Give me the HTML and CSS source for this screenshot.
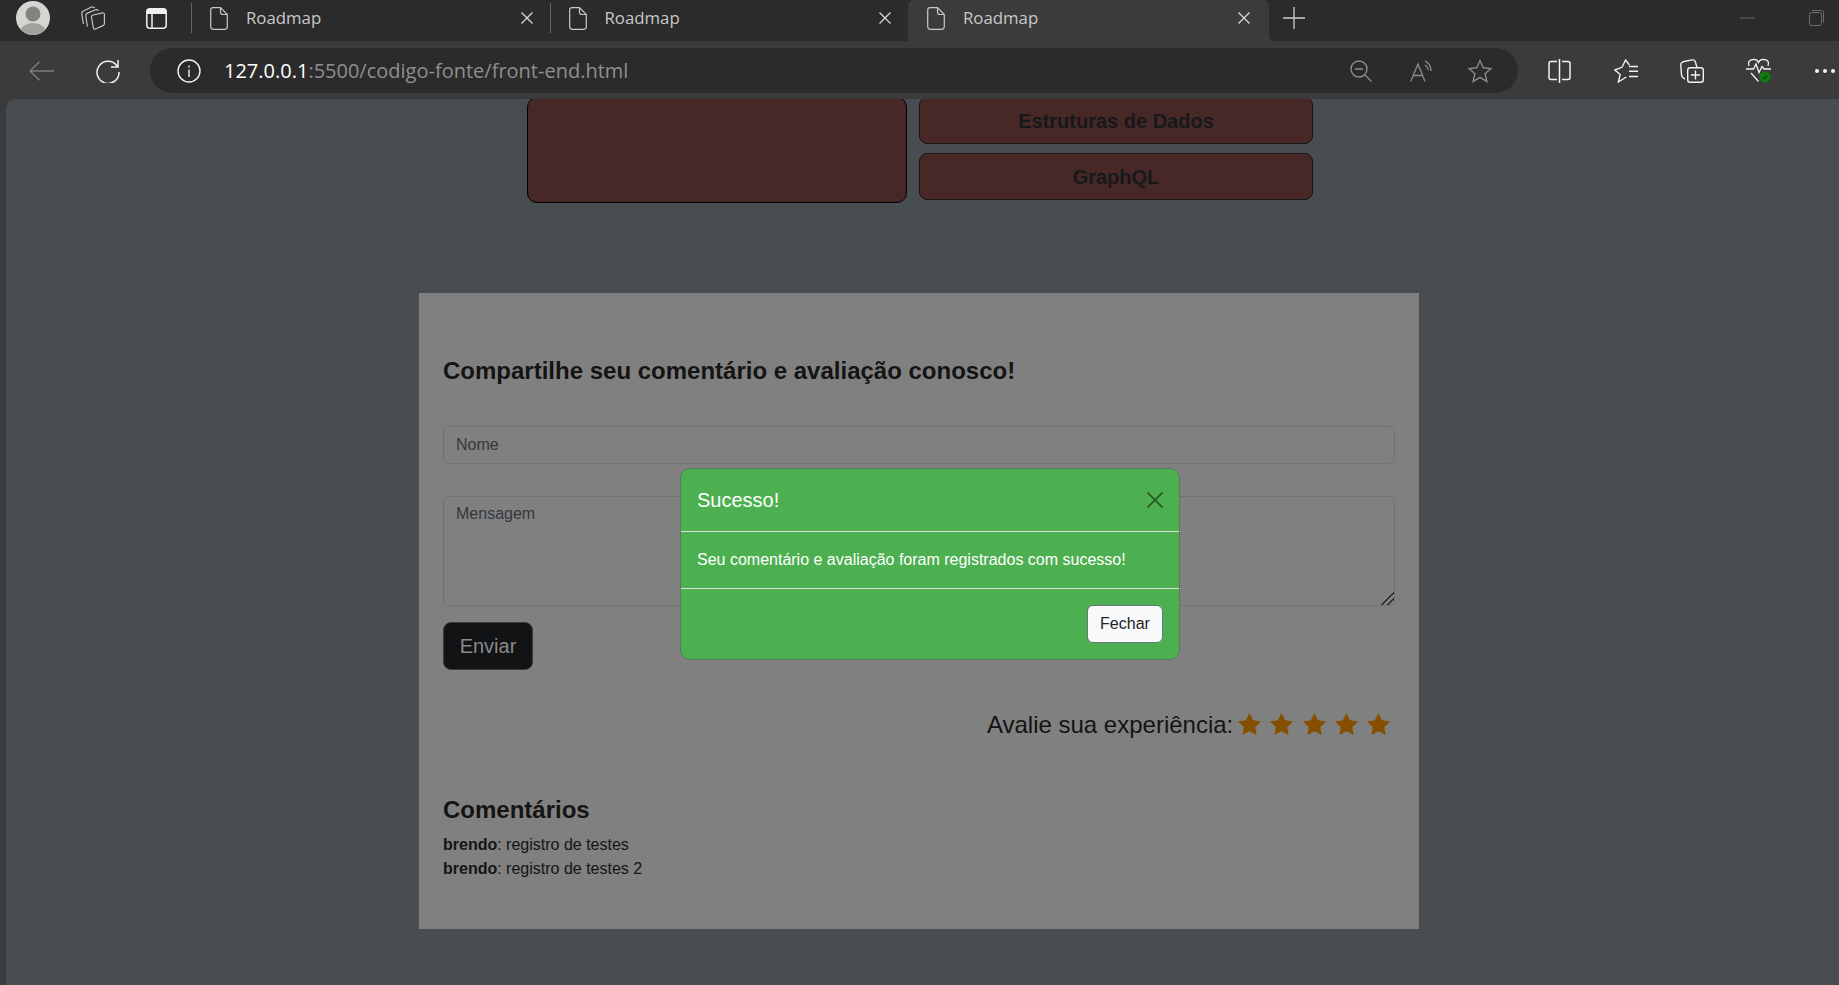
FILE: index.html
```html
<!DOCTYPE html>
<html lang="pt-BR">

<head>
    <meta charset="UTF-8">
    <meta name="viewport" content="width=device-width, initial-scale=1.0">
    <title>Roadmap</title>
    <link rel="stylesheet" href="styles.css">
</head>

<body>
    <!-- abas -->
    <div class="strip">
        <svg class="avatar" width="34" height="34" viewBox="0 0 34 34">
            <clipPath id="avatarClip"><circle cx="17" cy="17" r="17"/></clipPath>
            <g clip-path="url(#avatarClip)">
                <rect width="34" height="34" fill="#d6d5d1"/>
                <circle cx="17" cy="13" r="7.5" fill="#85837f"/>
                <ellipse cx="17" cy="31" rx="13" ry="9" fill="#a3a19d"/>
            </g>
        </svg>
        <svg class="workspaces" width="24" height="24" viewBox="0 0 24 24" fill="none" stroke="#c4c4c4" stroke-width="1.200">
            <path d="M2.500 18Q1.500 13 .8 8 .5 6 2 5.200L10.500 1Q12.500.2 13.800 2.200"/>
            <path d="M6.500 20.500Q5.500 15 4.800 10 4.500 8.200 6 7.400L14.500 3.800Q16.500 3 17.500 4.800"/>
            <path d="M12 9 21.500 6.800Q23.400 6.500 23.400 8.500V17.500Q23.400 19 22 19.600L14.500 23Q12.800 23.600 12.400 21.800L10.400 11Q10.200 9.400 12 9z"/>
        </svg>
        <svg class="vertical" width="21" height="21" viewBox="0 0 21 21" fill="none" stroke="#f0f0f0" stroke-width="1.500">
            <rect x=".8" y=".8" width="19.400" height="19.400" rx="3"/>
            <path d="M6 5.500v15"/>
            <path d="M3 .8h15q2.200 0 2.200 2.200v3H.8V3Q.8.8 3 .8z" fill="#f0f0f0" stroke="none"/>
        </svg>
        <div class="tab">
            <svg width="18" height="23" viewBox="0 0 18 23" fill="none" stroke="#c8c8c8" stroke-width="1.200"><path d="M3 .7h7.500L17.300 7.500V19.500q0 2.800-2.800 2.800H3.500Q.7 22.300.7 19.500V3q0-2.300 2.300-2.300zM10.500.7V5q0 2.500 2.500 2.500h4.300"/></svg>
            <span class="tab-title">Roadmap</span>
            <svg class="tab-close" width="12" height="12" viewBox="0 0 12 12" stroke="#d8d8d8" stroke-width="1.300"><path d="M.5.500l11 11M11.500.500l-11 11"/></svg>
        </div>
        <div class="tab">
            <svg width="18" height="23" viewBox="0 0 18 23" fill="none" stroke="#c8c8c8" stroke-width="1.200"><path d="M3 .7h7.500L17.300 7.500V19.500q0 2.800-2.800 2.800H3.500Q.7 22.300.7 19.500V3q0-2.300 2.300-2.300zM10.500.7V5q0 2.500 2.500 2.500h4.300"/></svg>
            <span class="tab-title">Roadmap</span>
            <svg class="tab-close" width="12" height="12" viewBox="0 0 12 12" stroke="#d8d8d8" stroke-width="1.300"><path d="M.5.500l11 11M11.500.500l-11 11"/></svg>
        </div>
        <div class="tab tab-active">
            <svg width="18" height="23" viewBox="0 0 18 23" fill="none" stroke="#c8c8c8" stroke-width="1.200"><path d="M3 .7h7.500L17.300 7.500V19.500q0 2.800-2.800 2.800H3.500Q.7 22.300.7 19.500V3q0-2.300 2.300-2.300zM10.500.7V5q0 2.500 2.500 2.500h4.300"/></svg>
            <span class="tab-title">Roadmap</span>
            <svg class="tab-close" width="12" height="12" viewBox="0 0 12 12" stroke="#d8d8d8" stroke-width="1.300"><path d="M.5.500l11 11M11.500.500l-11 11"/></svg>
        </div>
        <svg class="new-tab" width="22" height="22" viewBox="0 0 22 22" stroke="#d0d0d0" stroke-width="1.300"><path d="M11 0v22M0 11h22"/></svg>
        <svg class="minimize" width="15" height="2" viewBox="0 0 15 2" stroke="#6a6a6a"><path d="M0 1h15"/></svg>
        <svg class="restore" width="15" height="16" viewBox="0 0 15 16" fill="none" stroke="#6e6e6e"><rect x=".5" y="2.500" width="12" height="13" rx="2"/><path d="M3 .5h9.500q2 0 2 2v10"/></svg>
    </div>

    <!-- barra de endereço -->
    <div class="toolbar">
        <svg class="back" width="25" height="20" viewBox="0 0 25 20" fill="none" stroke="#7c7c7c" stroke-width="1.500"><path d="M25 10H1M10.500.7 1 10l9.500 9.300"/></svg>
        <svg class="reload" width="24" height="24" viewBox="0 0 24 24" fill="none" stroke="#f2f2f2" stroke-width="1.500"><path d="M21 7A11 11 0 1 0 23 13M22 1v7h-7"/></svg>
        <div class="urlbar">
            <svg class="info" width="24" height="24" viewBox="0 0 24 24" fill="none" stroke="#f2f2f2" stroke-width="1.400"><circle cx="12" cy="12" r="11"/><path d="M12 10.500v7.500M12 6.500v2"/></svg>
            <span class="url"><b>127.0.0.1</b>:5500/codigo-fonte/front-end.html</span>
            <svg class="zoom-out" width="22" height="22" viewBox="0 0 22 22" fill="none" stroke="#8c8c8c" stroke-width="1.400"><circle cx="9" cy="9" r="8"/><path d="M5 9h8M15 15l6.500 6.500"/></svg>
            <svg class="read" width="24" height="22" viewBox="0 0 24 22" fill="none" stroke="#8c8c8c" stroke-width="1.300"><path d="M.7 21.500 8 4l7 17.500M3 15.500h10M15 1q6 3 6 10M15 5q3 2 3.500 5.500"/></svg>
            <svg class="fav" width="24" height="24" viewBox="0 0 24 24" fill="none" stroke="#8c8c8c" stroke-width="1.400"><path d="M12 1.500 15.200 8.800 23 9.500 17.100 14.700 18.900 22.500 12 18.300 5.100 22.500 6.900 14.700 1 9.500 8.800 8.800z"/></svg>
        </div>
        <svg class="split" width="23" height="24" viewBox="0 0 23 24" fill="none" stroke="#f2f2f2" stroke-width="1.500"><path d="M9 2.500H3Q1 2.500 1 4.500v14q0 2 2 2h6M14 2.500h6q2 0 2 2v14q0 2-2 2h-6M11.500 0v24"/></svg>
        <svg class="favorites" width="24" height="24" viewBox="0 0 24 24" fill="none" stroke="#f2f2f2" stroke-width="1.400"><path d="M15.500 6 11.600 1 8 8.300.8 11l5.400 4.500L4.300 23l8-5M15 7.500h9M15 12.300h9M15 17.500h9"/></svg>
        <svg class="collections" width="24" height="24" viewBox="0 0 24 24" fill="none" stroke="#f2f2f2" stroke-width="1.400"><path d="M5 20Q2 19 1.500 16L.8 6Q.6 3.500 3 2.800L12 .9q2.500-.4 3.300 1.800L17 8.500"/><rect x="7.700" y="8.700" width="15.600" height="14.600" rx="2.500"/><path d="M15.500 11.500v9M11 16h9"/></svg>
        <svg class="health" width="25" height="25" viewBox="0 0 25 25" fill="none" stroke="#f2f2f2" stroke-width="1.300"><path d="M3 8Q1 2 7 1.500 11 1 12.500 4.500 14 1 18 1.500 24 2 22 8M5 15l7.500 8.500"/><path d="M0 11h7.500l2.500-5 3 8.500 3-6 2 2.500h7"/><circle cx="19" cy="19" r="5.500" fill="#107c10" stroke="none"/><path d="M16.700 19l1.800 2 3-3.500" stroke="#0a4a0a"/></svg>
        <div class="more"><i></i><i></i><i></i></div>
    </div>

    <div class="page">
        <div class="topics">
            <div class="topic-big"></div>
            <div class="topic-col">
                <div class="topic">Estruturas de Dados</div>
                <div class="topic">GraphQL</div>
            </div>
        </div>

        <section class="card">
            <h3>Compartilhe seu comentário e avaliação conosco!</h3>
            <form>
                <input class="field" type="text" placeholder="Nome">
                <textarea class="field field-msg" placeholder="Mensagem"></textarea>
                <button class="send" type="button">Enviar</button>
            </form>
            <div class="rating">
                <span>Avalie sua experiência:</span>
                <div class="stars">
                    <svg width="23" height="22" viewBox="0 0 24 23"><polygon points="12,0 15.800,7.600 24,8.800 18,14.700 19.500,23 12,19 4.500,23 6,14.700 0,8.800 8.200,7.600"/></svg>
                    <svg width="23" height="22" viewBox="0 0 24 23"><polygon points="12,0 15.800,7.600 24,8.800 18,14.700 19.500,23 12,19 4.500,23 6,14.700 0,8.800 8.200,7.600"/></svg>
                    <svg width="23" height="22" viewBox="0 0 24 23"><polygon points="12,0 15.800,7.600 24,8.800 18,14.700 19.500,23 12,19 4.500,23 6,14.700 0,8.800 8.200,7.600"/></svg>
                    <svg width="23" height="22" viewBox="0 0 24 23"><polygon points="12,0 15.800,7.600 24,8.800 18,14.700 19.500,23 12,19 4.500,23 6,14.700 0,8.800 8.200,7.600"/></svg>
                    <svg width="23" height="22" viewBox="0 0 24 23"><polygon points="12,0 15.800,7.600 24,8.800 18,14.700 19.500,23 12,19 4.500,23 6,14.700 0,8.800 8.200,7.600"/></svg>
                </div>
            </div>
            <h4>Comentários</h4>
            <p class="comment"><strong>brendo</strong>: registro de testes</p>
            <p class="comment"><strong>brendo</strong>: registro de testes 2</p>
        </section>

        <div class="modal">
            <div class="modal-header">
                <h5>Sucesso!</h5>
                <svg width="16" height="16" viewBox="0 0 16 16" stroke="#275a2a" stroke-width="1.700"><path d="M.5.500l15 15M15.500.500l-15 15"/></svg>
            </div>
            <div class="modal-body">Seu comentário e avaliação foram registrados com sucesso!</div>
            <div class="modal-footer">
                <button class="close-btn" type="button">Fechar</button>
            </div>
        </div>
    </div>
</body>

</html>
```

FILE: styles.css
```css
body {
    margin: 0;
    height: 985px;
    overflow: hidden;
    background-color: #3b3b3b;
    font-family: "Liberation Sans", Arial, sans-serif;
    color: #141414;
}

svg {
    display: block;
    flex-shrink: 0;
}

/* abas */
.strip {
    display: flex;
    align-items: center;
    height: 41px;
    box-sizing: border-box;
    padding-bottom: 5px;
    background-color: #2b2b2b;
}

.avatar {
    margin-left: 16px;
}

.workspaces {
    margin-left: 31px;
}

.vertical {
    margin-left: 41px;
    margin-right: 24px;
}

.tab {
    display: flex;
    align-items: center;
    width: 358.5px;
    height: 30px;
    box-sizing: border-box;
    padding-left: 18px;
    padding-right: 17px;
    border-left: 1px solid #666;
    font-family: "Open Sans", sans-serif;
    font-size: 16.8px;
    color: #c8c8c8;
    position: relative;
}

.tab-title {
    margin-left: 18px;
    margin-bottom: 2px;
}

.tab-close {
    margin-left: auto;
}

.tab-active {
    align-self: flex-start;
    width: 361px;
    height: 41px;
    padding-bottom: 5px;
    padding-left: 19px;
    padding-right: 19px;
    border-left: 0;
    border-radius: 6px 6px 0 0;
    background-color: #3b3b3b;
}

.tab-active::after {
    content: "";
    position: absolute;
    right: -6px;
    bottom: 0;
    width: 6px;
    height: 6px;
    background: radial-gradient(circle at 100% 0, #2b2b2b 6px, #3b3b3b 6.5px);
}

.new-tab {
    margin-left: 14px;
}

.minimize {
    margin-left: auto;
}

.restore {
    margin-left: 54px;
    margin-right: 15px;
}

/* barra de endereço */
.toolbar {
    display: flex;
    align-items: center;
    height: 58px;
    box-sizing: border-box;
    padding-top: 1px;
}

.back {
    margin-left: 29px;
}

.reload {
    margin-left: 42px;
}

.urlbar {
    display: flex;
    align-items: center;
    width: 1368px;
    height: 45px;
    margin-left: 30px;
    box-sizing: border-box;
    padding-left: 27px;
    border-radius: 23px;
    background-color: #2b2b2b;
}

.url {
    margin-left: 23px;
    font-family: "Open Sans", sans-serif;
    font-size: 20px;
    color: #8f8f8f;
}

.url b {
    font-weight: 400;
    color: #fff;
}

.zoom-out {
    margin-left: auto;
}

.read {
    margin-left: 38px;
}

.fav {
    margin-left: 34px;
    margin-right: 26px;
}

.split {
    margin-left: 30px;
}

.favorites {
    margin-left: 43px;
}

.collections {
    margin-left: 42px;
}

.health {
    margin-left: 42px;
}

.more {
    display: flex;
    gap: 4px;
    margin-left: 44px;
}

.more i {
    width: 4px;
    height: 4px;
    border-radius: 50%;
    background-color: #f2f2f2;
}

/* página, já escurecida pelo fundo do modal */
.page {
    height: 886px;
    margin-left: 6px;
    border-top-left-radius: 10px;
    background-color: #484d51;
    overflow: hidden;
    position: relative;
}

.topics {
    display: flex;
    gap: 12px;
    width: 786px;
    margin-left: 521px;
    margin-top: -2px;
}

.topic-big {
    flex: 0 0 380px;
    box-sizing: border-box;
    border: 1px solid #000;
    border-radius: 10px;
    background-color: #472826;
}

.topic-col {
    flex: 1;
    display: flex;
    flex-direction: column;
    gap: 9px;
    padding-bottom: 3px;
}

.topic {
    height: 47px;
    box-sizing: border-box;
    border: 1px solid #16181a;
    border-radius: 8px;
    background-color: #472826;
    text-align: center;
    font-size: 20px;
    font-weight: bold;
    line-height: 47px;
    color: #16181a;
}

.card {
    width: 1000px;
    height: 636px;
    box-sizing: border-box;
    margin-left: 413px;
    margin-top: 90px;
    padding: 63px 24px 0;
    background-color: #808080;
}

h3 {
    margin: 0 0 41px;
    font-size: 24px;
    line-height: 29px;
}

.field {
    display: block;
    width: 100%;
    height: 38px;
    box-sizing: border-box;
    margin-bottom: 32px;
    padding: 6px 12px;
    border: 1px solid #727272;
    border-radius: 6px;
    background-color: #808080;
    font-family: inherit;
    font-size: 16px;
}

.field::placeholder {
    color: #33383d;
}

.field-msg {
    height: 110px;
    margin-bottom: 16px;
    padding-top: 8px;
}

.field-msg::-webkit-resizer {
    background: linear-gradient(135deg, transparent 55%, #2c2c2c 55% 62%, transparent 62% 76%, #2c2c2c 76% 83%, transparent 83%);
}

.send {
    display: block;
    width: 90px;
    height: 48px;
    padding-top: 2px;
    border: 1px solid #3a3c3e;
    border-radius: 8px;
    background-color: #111315;
    font-family: inherit;
    font-size: 20px;
    color: #8a8a8a;
}

.rating {
    display: flex;
    justify-content: flex-end;
    align-items: center;
    gap: 5px;
    height: 36px;
    margin-top: 37px;
    padding-right: 5px;
    font-size: 24px;
}

.stars {
    display: flex;
    gap: 9.2px;
    margin-bottom: 2px;
    fill: #864f00;
}

h4 {
    margin: 52px 0 9px;
    font-size: 24px;
    line-height: 29px;
}

.comment {
    margin: 0;
    font-size: 16px;
    line-height: 24px;
}

/* modal */
.modal {
    position: absolute;
    left: 674px;
    top: 369px;
    width: 500px;
    box-sizing: border-box;
    border: 1px solid #5f7a60;
    border-radius: 10px;
    background-color: #4caf50;
    color: #fff;
}

.modal-header {
    display: flex;
    justify-content: space-between;
    align-items: center;
    height: 63px;
    box-sizing: border-box;
    padding: 0 16px;
    border-bottom: 1px solid #dee2e6;
}

h5 {
    margin: 0;
    font-size: 20px;
    font-weight: 400;
}

.modal-body {
    height: 57px;
    box-sizing: border-box;
    padding: 16px;
    font-size: 16px;
    line-height: 24px;
    border-bottom: 1px solid #dee2e6;
}

.modal-footer {
    display: flex;
    justify-content: flex-end;
    padding: 16px;
}

.close-btn {
    width: 76px;
    height: 38px;
    border: 1px solid #6c757d;
    border-radius: 6px;
    background-color: #f8f9fa;
    font-family: inherit;
    font-size: 16px;
    color: #212529;
}
```
